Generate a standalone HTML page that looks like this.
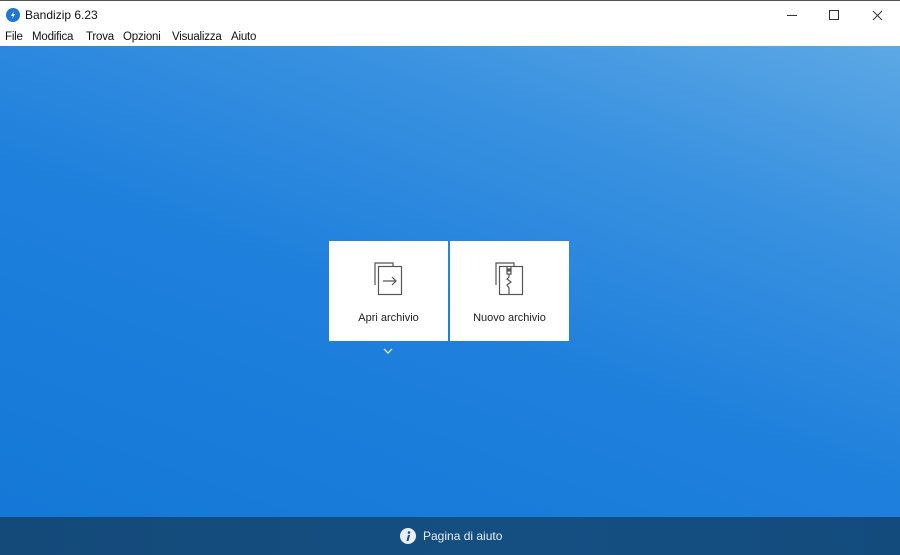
<!DOCTYPE html>
<html><head><style>
*{margin:0;padding:0;box-sizing:border-box}
body{width:900px;height:555px;overflow:hidden;font-family:"Liberation Sans",sans-serif;position:relative;background:#fff}
.title{position:absolute;top:0;left:0;width:900px;height:30px;background:#fff;border-top:1px solid #555}
.title span{position:absolute;left:25px;top:7px;font-size:12px;color:#111}
.menu{position:absolute;top:30px;left:0;width:900px;height:16px;font-size:11.5px;color:#111;letter-spacing:-0.2px}
.menu span{position:absolute;top:1px}
.main{position:absolute;top:46px;left:0;width:900px;height:471px;background:linear-gradient(200deg,#5da8e5 0%,#3a92e0 25%,#1f80dc 55%,#1478d8 100%)}
.foot{position:absolute;top:517px;left:0;width:900px;height:38px;background:linear-gradient(90deg,#134a7a,#154f82 60%,#134b7d)}
.card{position:absolute;top:241px;width:119px;height:100px;background:#fff}
.card div{position:absolute;width:100%;top:71px;text-align:center;font-size:11px;color:#222}
</style></head><body>
<div class="title">
<svg style="position:absolute;left:6px;top:7px" width="14" height="14"><circle cx="7" cy="7" r="7" fill="#1e78d0"/><path d="M8 3 L5 8 H7 L6 11 L9 6 H7Z" fill="#fff"/></svg>
<span>Bandizip 6.23</span>
<svg style="position:absolute;left:780px;top:0" width="120" height="30" fill="none" stroke="#333" stroke-width="1"><path d="M7 14.5H17"/><rect x="49.5" y="9.5" width="9" height="9"/><path d="M93 10L102 19M102 10L93 19"/></svg>
</div>
<div class="menu"><span style="left:5px">File</span><span style="left:32px">Modifica</span><span style="left:86px">Trova</span><span style="left:123px">Opzioni</span><span style="left:172px">Visualizza</span><span style="left:231px">Aiuto</span></div>
<div class="main"></div>
<div class="card" style="left:329px">
<svg style="position:absolute;left:44px;top:20px" width="32" height="36" fill="none" stroke="#555" stroke-width="1.2"><path d="M2 24V2H20V5"/><rect x="5.5" y="5.5" width="23" height="28"/><path d="M10 20H23M19 16L23 20L19 24"/></svg>
<div>Apri archivio</div></div>
<div class="card" style="left:450px">
<svg style="position:absolute;left:44px;top:20px" width="32" height="36" fill="none" stroke="#555" stroke-width="1.2"><path d="M2 24V2H20V5"/><rect x="5.5" y="5.5" width="23" height="28"/><path d="M13 5.5V13H17V5.5M15 13V16L13 18L17 21L13 24L15 27V33"/><rect x="14" y="8" width="2" height="2" fill="#555"/></svg>
<div>Nuovo archivio</div></div>
<svg style="position:absolute;left:383px;top:348px" width="10" height="6" fill="none" stroke="#fff" stroke-width="1.2"><path d="M1 1L5 5L9 1"/></svg>
<div class="foot">
<svg style="position:absolute;left:400px;top:11px" width="16" height="16"><circle cx="8" cy="8" r="8" fill="#e8eef5"/><circle cx="9" cy="4.5" r="1.3" fill="#134a7a"/><path d="M8 7H10L8.5 13H6.5Z" fill="#134a7a"/></svg>
<span style="position:absolute;left:423px;top:12px;font-size:12px;color:#e8eef5">Pagina di aiuto</span>
</div>
</body></html>
